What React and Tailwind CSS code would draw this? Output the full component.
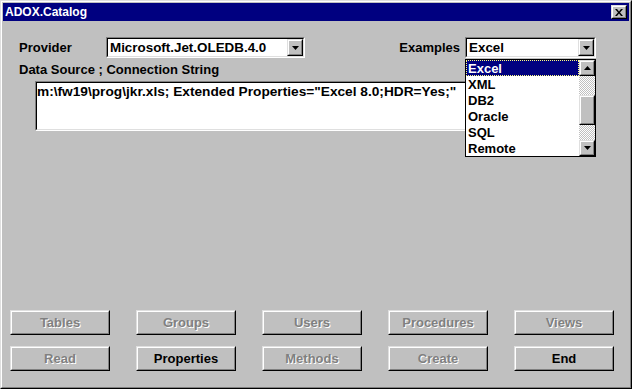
import React from 'react';

const checker = "bg-[repeating-conic-gradient(#c0c0c0_0_25%,#ffffff_0_50%)] bg-[length:2px_2px]";

function Sunken({ className = '', children }) {
  return (
    <div className={`border border-t-[#808080] border-l-[#808080] border-r-white border-b-white ${className}`}>
      <div className="h-full w-full border border-t-black border-l-black border-r-[#dfdfdf] border-b-[#dfdfdf] bg-white">
        {children}
      </div>
    </div>
  );
}

function Raised({ className = '', children }) {
  return (
    <div className={`border border-t-[#dfdfdf] border-l-[#dfdfdf] border-r-black border-b-black bg-[#c0c0c0] ${className}`}>
      <div className="h-full w-full border border-t-white border-l-white border-r-[#808080] border-b-[#808080] flex items-center justify-center">
        {children}
      </div>
    </div>
  );
}

function DownArrow() {
  return (
    <svg width="7" height="4" viewBox="0 0 7 4">
      <polygon points="0,0 7,0 3.5,4" fill="#000" />
    </svg>
  );
}

function UpArrow() {
  return (
    <svg width="7" height="4" viewBox="0 0 7 4">
      <polygon points="0,4 7,4 3.5,0" fill="#000" />
    </svg>
  );
}

function Combo({ className, value }) {
  return (
    <Sunken className={className}>
      <div className="flex h-full">
        <span className="flex-1 pl-[2px] text-[13.4px] font-bold leading-[17px] text-black">{value}</span>
        <Raised className="w-[16px] h-full">
          <DownArrow />
        </Raised>
      </div>
    </Sunken>
  );
}

function Btn({ label, disabled }) {
  return (
    <Raised className="w-[100px] h-[25px]">
      <span
        className={
          disabled
            ? "text-[13px] font-bold text-[#808080] [text-shadow:1px_1px_0_#ffffff]"
            : "text-[13px] font-bold text-black"
        }
      >
        {label}
      </span>
    </Raised>
  );
}

export default function App() {
  const items = ['Excel', 'XML', 'DB2', 'Oracle', 'SQL', 'Remote'];

  return (
    <div className="w-[632px] h-[389px] bg-[#c0c0c0] border border-t-[#dfdfdf] border-l-[#dfdfdf] border-r-black border-b-black font-['Liberation_Sans',Arial,sans-serif] select-none">
      <div className="h-full border border-t-white border-l-white border-r-[#808080] border-b-[#808080] p-px flex flex-col">
        {/* Title bar */}
        <div className="h-[18px] bg-[#000080] flex items-center justify-between">
          <span className="pl-[2px] text-[12px] font-bold text-white leading-none">ADOX.Catalog</span>
          <Raised className="w-[16px] h-[14px] mr-[2px]">
            <svg width="8" height="7" viewBox="0 0 8 7">
              <path d="M0 0h2l2 2.5L6 0h2L5 3.5 8 7H6L4 4.5 2 7H0l3-3.5z" fill="#000" />
            </svg>
          </Raised>
        </div>

        {/* Content */}
        <div className="relative flex-1 flex flex-col">
          <div className="flex items-center mt-4 pl-4 h-[21px]">
            <span className="w-[87px] text-[13px] font-bold text-black">Provider</span>
            <Combo className="w-[199px] h-[21px]" value="Microsoft.Jet.OLEDB.4.0" />
            <span className="ml-auto mr-[5px] text-[13px] font-bold text-black">Examples</span>
            <Combo className="w-[131px] h-[21px] mr-[33px]" value="Excel" />
          </div>

          <div className="pl-4 mt-[5px] text-[13px] font-bold leading-[14px] text-black">
            Data Source ; Connection String
          </div>

          <Sunken className="ml-[32px] mt-[4px] w-[555px] h-[50px]">
            <div className="pt-px text-[13.7px] font-bold leading-[15px] text-black">
              m:\fw19\prog\jkr.xls; Extended Properties="Excel 8.0;HDR=Yes;"
            </div>
          </Sunken>

          {/* Buttons */}
          <div className="mt-auto pl-[7px] pb-[15px] flex flex-col gap-[11px]">
            <div className="flex gap-[26px]">
              <Btn label="Tables" disabled />
              <Btn label="Groups" disabled />
              <Btn label="Users" disabled />
              <Btn label="Procedures" disabled />
              <Btn label="Views" disabled />
            </div>
            <div className="flex gap-[26px]">
              <Btn label="Read" disabled />
              <Btn label="Properties" />
              <Btn label="Methods" disabled />
              <Btn label="Create" disabled />
              <Btn label="End" />
            </div>
          </div>

          {/* Dropdown list */}
          <div className="absolute left-[462px] top-[38px] w-[131px] h-[98px] border border-black bg-white flex">
            <div className="flex-1 flex flex-col">
              {items.map((it, i) => (
                <div
                  key={it}
                  className={
                    i === 0
                      ? "h-[16px] pl-[2px] pt-px bg-[#000080] text-white text-[13px] font-bold leading-[15px] outline-1 outline-dotted outline-[#ffff80] outline-offset-[-1px]"
                      : "h-[16px] pl-[2px] pt-px text-black text-[13px] font-bold leading-[15px]"
                  }
                >
                  {it}
                </div>
              ))}
            </div>
            <div className="w-[16px] flex flex-col">
              <Raised className="h-[16px]">
                <UpArrow />
              </Raised>
              <div className={`h-[19px] ${checker}`} />
              <Raised className="h-[30px]" />
              <div className={`flex-1 ${checker}`} />
              <Raised className="h-[16px]">
                <DownArrow />
              </Raised>
            </div>
          </div>
        </div>
      </div>
    </div>
  );
}
